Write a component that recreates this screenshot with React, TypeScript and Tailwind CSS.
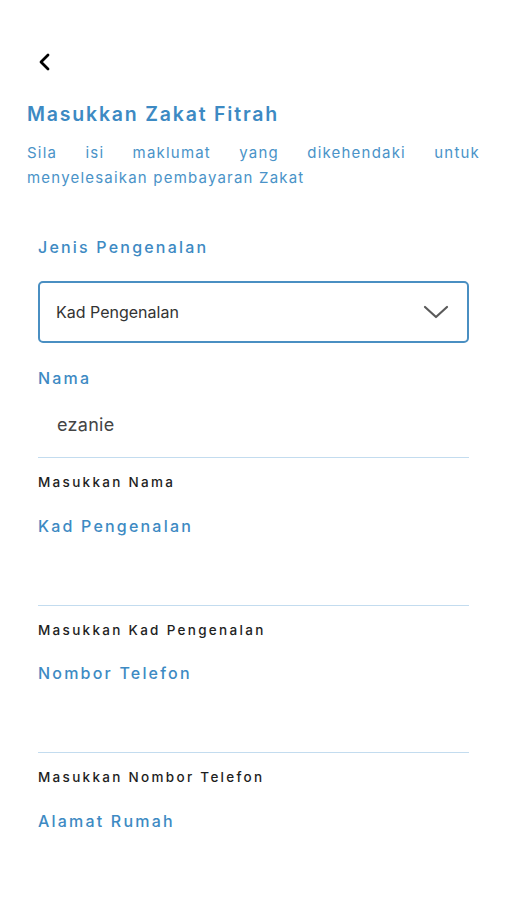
import { useState } from 'react'

const font = { fontFamily: 'Inter, "Liberation Sans", sans-serif' }

function Label({ text }: { text: string }) {
  return <div className="h-[24px] leading-[24px] text-[16px] tracking-[2.2px] font-medium text-[#3d8ac3]">{text}</div>
}

function Field({ label, value, helper }: { label: string; value?: string; helper: string }) {
  return (
    <div className="px-[38px]">
      <Label text={label} />
      <div className="h-[67px] flex items-center pl-[19px] pt-[2px] text-[18px] tracking-[0.3px] text-[#444]">{value}</div>
      <div className="h-px bg-[#c3dcef]" />
      <div className="h-[55.5px] pt-[15px] leading-[18px] text-[13.5px] tracking-[2.3px] font-medium text-[#1e1e1e]">{helper}</div>
    </div>
  )
}

export default function App() {
  const [name] = useState('ezanie')

  return (
    <main className="min-h-screen bg-white" style={font}>
      <div className="pt-[53px] pl-[37px]">
        <svg width="14" height="18" viewBox="0 0 14 18" fill="none">
          <path d="M11 2 L4 9 L11 16" stroke="#000" strokeWidth="2.8" strokeLinecap="round" strokeLinejoin="round" />
        </svg>
      </div>

      <h1 className="mt-[31px] ml-[27px] text-[19.5px] leading-[24px] font-semibold tracking-[1.8px] text-[#3d8ac3]">
        Masukkan Zakat Fitrah
      </h1>
      <p className="mt-[14px] mx-[27px] text-[15px] leading-[25px] tracking-[1.2px] text-[#4a93c8] text-justify">
        Sila isi maklumat yang dikehendaki untuk menyelesaikan pembayaran Zakat
      </p>

      <div className="px-[38px] mt-[45px]">
        <Label text="Jenis Pengenalan" />
        <div className="mt-[22px] h-[62px] border-2 border-[#4a8fc2] rounded-[5px] flex items-center justify-between pl-[16px] pr-[18px]">
          <span className="text-[16px] text-[#333]">Kad Pengenalan</span>
          <svg width="26" height="16" viewBox="0 0 26 16" fill="none">
            <path d="M2 3 L13 13 L24 3" stroke="#5a5a5a" strokeWidth="2.2" strokeLinecap="round" strokeLinejoin="round" />
          </svg>
        </div>
      </div>

      <div className="mt-[23px]">
        <Field label="Nama" value={name} helper="Masukkan Nama" />
        <Field label="Kad Pengenalan" helper="Masukkan Kad Pengenalan" />
        <Field label="Nombor Telefon" helper="Masukkan Nombor Telefon" />
        <div className="px-[38px]">
          <Label text="Alamat Rumah" />
        </div>
      </div>
    </main>
  )
}
